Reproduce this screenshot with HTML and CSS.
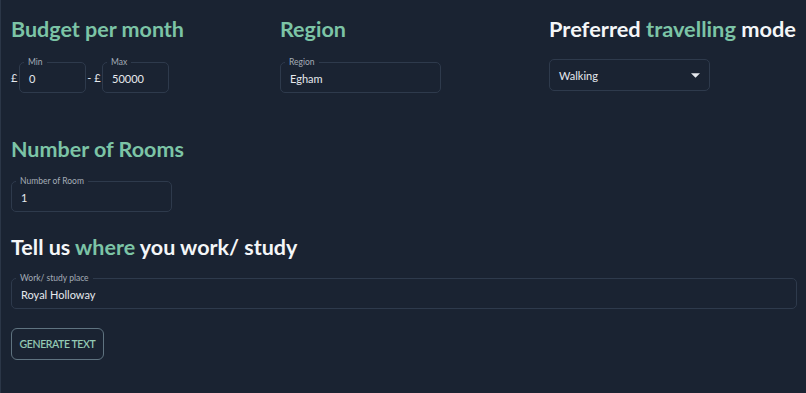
FILE: index.html
```html
<!DOCTYPE html>
<html>
<head>
<meta charset="utf-8">
<link rel="stylesheet" href="styles.css">
</head>
<body>
<div class="page">
  <div class="top-row">
    <section class="col">
      <h2 class="heading accent">Budget per month</h2>
      <div class="budget">
        <span class="cur">£</span>
        <div class="field small">
          <span class="flabel">Min</span>
          <span class="value">0</span>
        </div>
        <span class="cur dash">- £</span>
        <div class="field small">
          <span class="flabel">Max</span>
          <span class="value">50000</span>
        </div>
      </div>
    </section>
    <section class="col">
      <h2 class="heading accent">Region</h2>
      <div class="field medium">
        <span class="flabel">Region</span>
        <span class="value">Egham</span>
      </div>
    </section>
    <section class="col">
      <h2 class="heading">Preferred <span class="accent">travelling</span> mode</h2>
      <div class="select">
        <span class="value">Walking</span>
        <svg class="caret" width="9" height="5" viewBox="0 0 10 5"><path d="M0 0 L10 0 L5 5 Z" fill="#e6e9ee"/></svg>
      </div>
    </section>
  </div>

  <section class="block rooms">
    <h2 class="heading accent">Number of Rooms</h2>
    <div class="field medium">
      <span class="flabel">Number of Room</span>
      <span class="value">1</span>
    </div>
  </section>

  <section class="block work">
    <h2 class="heading">Tell us <span class="accent">where</span> you work/ study</h2>
    <div class="field wide">
      <span class="flabel">Work/ study place</span>
      <span class="value">Royal Holloway</span>
    </div>
  </section>

  <button class="btn">GENERATE TEXT</button>
</div>
</body>
</html>
```
FILE: styles.css
```css
* { box-sizing: border-box; }
html, body { margin: 0; padding: 0; }
body {
  background: #1a2332;
  font-family: Lato, "Noto Sans", sans-serif;
  color: #eef1f4;
  width: 806px;
  height: 393px;
  overflow: hidden;
}
.page {
  height: 393px;
  border-left: 1px solid #2b3647;
  padding: 16px 9px 0 10px;
}
.top-row {
  display: grid;
  grid-template-columns: 269px 269px auto;
}
.heading {
  margin: 0;
  font-size: 21.5px;
  font-weight: 700;
  line-height: 26px;
  color: #f4f6f8;
  white-space: nowrap;
}
.top-row .col:last-child .heading { font-size: 21.8px; }
.accent { color: #7cc4a6; }
.budget {
  display: flex;
  align-items: center;
  margin-top: 20px;
}
.cur {
  font-size: 11px;
  color: #e6e9ee;
  width: 8px;
}
.cur.dash { width: 16px; text-align: center; }
.field {
  position: relative;
  height: 31px;
  border: 1px solid #2e3a4c;
  border-radius: 5px;
  display: flex;
  align-items: center;
  padding: 0 9px;
}
.field.small { width: 67px; }
.field.medium { width: 161px; margin-top: 20px; }
.field.wide { width: 786px; margin-top: 18px; }
.flabel {
  position: absolute;
  top: -6px;
  left: 4px;
  padding: 0 4px;
  background: #1a2332;
  font-size: 8.5px;
  line-height: 10px;
  color: #a4acb6;
}
.value {
  font-size: 11px;
  color: #e6e9ee;
  padding-top: 1px;
}
.select {
  margin-top: 17px;
  width: 161px;
  height: 32px;
  border: 1px solid #2e3a4c;
  border-radius: 5px;
  display: flex;
  align-items: center;
  justify-content: space-between;
  padding: 0 9px 0 9px;
}
.select .value { padding-top: 0; }
.block.rooms { margin-top: 43px; }
.block.rooms .field.medium { margin-top: 19px; }
.block.work { margin-top: 22px; }
.btn {
  margin-top: 19px;
  width: 93px;
  height: 32px;
  background: transparent;
  border: 1px solid #5f7380;
  border-radius: 6px;
  font-family: Lato, "Noto Sans", sans-serif;
  font-size: 10.5px;
  font-weight: 600;
  color: #93c9b3;
  padding: 0;
  letter-spacing: -0.4px;
}
```
